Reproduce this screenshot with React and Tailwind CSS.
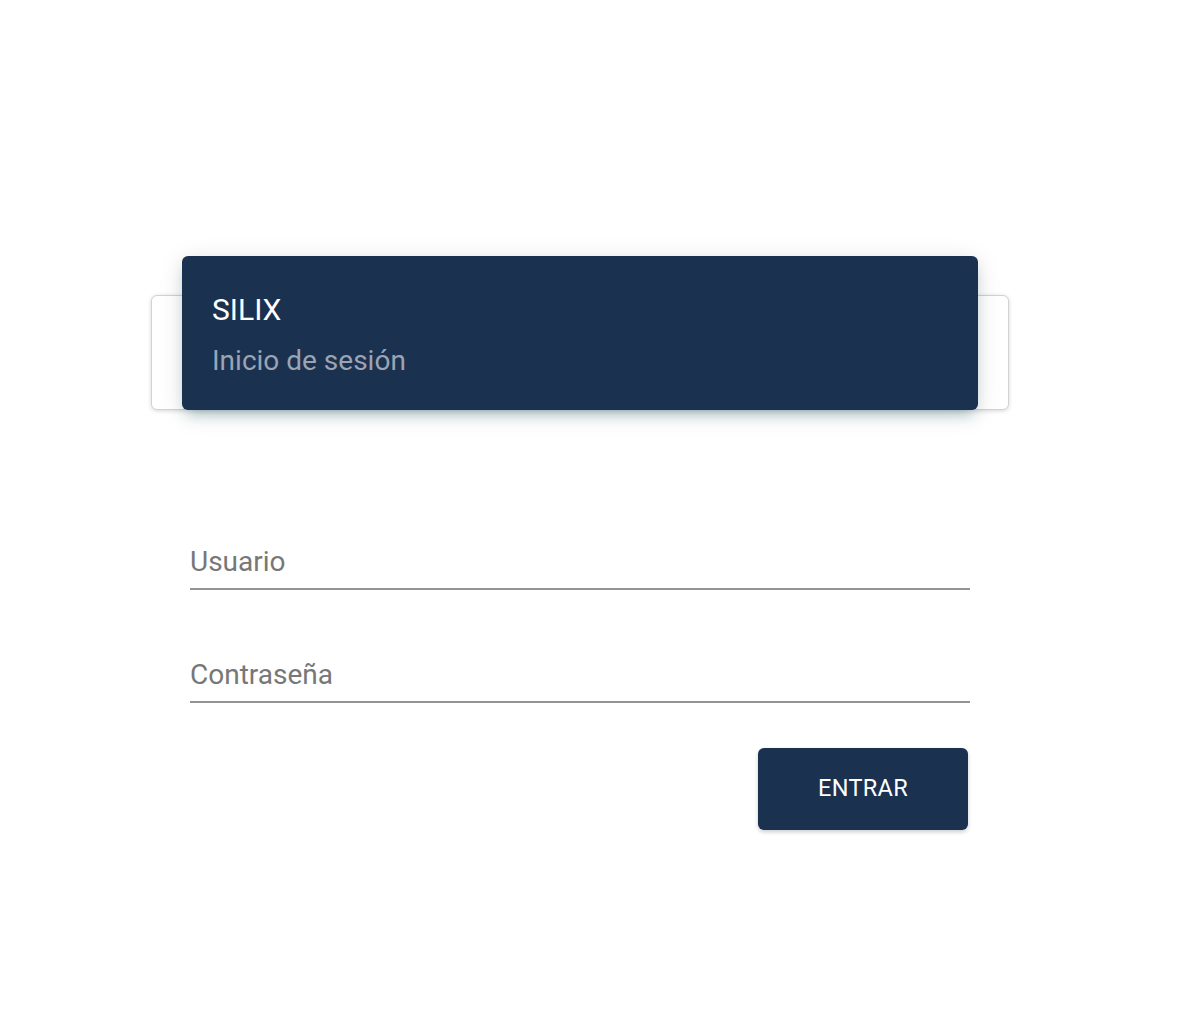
import React from 'react';

export default function App() {
  return (
    <div className="min-h-screen w-full bg-white" style={{ fontFamily: 'Roboto, "Liberation Sans", sans-serif' }}>
      <div className="pt-[295px] pl-[151px] w-[1160px]">
        {/* Card */}
        <div className="w-[858px] h-[115px] rounded-md border border-[#d2d2d2] bg-white shadow-[0_1px_4px_0_rgba(0,0,0,0.16)]">
          <div className="-mt-[40px] mx-[30px] h-[154px] rounded-md bg-[#1b3150] px-[30px] pt-[36px] shadow-[0_4px_24px_0_rgba(0,0,0,0.12),0_8px_14px_-5px_rgba(30,110,120,0.35)]">
            <h1 className="text-[30px] leading-[36px] text-white">SILIX</h1>
            <p className="mt-[16px] text-[28px] leading-[34px] text-[#9aa4b3]">Inicio de sesión</p>
          </div>
        </div>

        {/* Form */}
        <div className="mt-[136px] ml-[39px] w-[780px]">
          <div className="border-b-2 border-[#949494] pb-[10px]">
            <span className="text-[28px] leading-[32px] text-[#777777]">Usuario</span>
          </div>
          <div className="mt-[69px] border-b-2 border-[#949494] pb-[10px]">
            <span className="text-[28px] leading-[32px] text-[#777777]">Contraseña</span>
          </div>
          <div className="mt-[45px] flex justify-end pr-[2px]">
            <button className="w-[210px] h-[82px] rounded-md bg-[#1b3150] text-white text-[23.5px] tracking-[0.3px] shadow-[0_2px_4px_0_rgba(0,0,0,0.2)]">
              ENTRAR
            </button>
          </div>
        </div>
      </div>
    </div>
  );
}
